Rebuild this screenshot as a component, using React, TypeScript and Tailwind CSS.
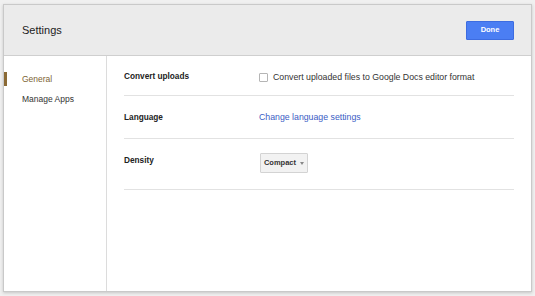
import React from "react";

export default function App() {
  const font = { fontFamily: '"Liberation Sans", Arial, Helvetica, sans-serif' };
  return (
    <div className="w-[535px] h-[296px] bg-[#f0f0f0] pt-[4px] pl-[3px]" style={font}>
      <div className="w-[529px] h-[288px] bg-white border border-[#c9c9c9] shadow-[0_1px_3px_rgba(0,0,0,0.18)] flex flex-col">
        {/* Header */}
        <div className="h-[51px] shrink-0 bg-[#ebebeb] border-b border-[#cfcfcf] flex items-center justify-between pl-[18px] pr-[17px]">
          <span className="text-[11px] text-[#222]">Settings</span>
          <button className="w-[48px] h-[19px] bg-[#4b7ef3] border border-[#3d6ce0] rounded-[1px] text-white text-[7.5px] font-bold flex items-center justify-center">
            Done
          </button>
        </div>
        {/* Body */}
        <div className="flex flex-1 min-h-0">
          {/* Sidebar */}
          <div className="w-[103px] shrink-0 border-r border-[#dcdcdc] pt-[16px]">
            <div className="relative h-[14px] flex items-center pl-[18px]">
              <div className="absolute left-0 top-0 w-[3px] h-[14px] bg-[#8b6a35]" />
              <span className="text-[8.5px] text-[#7d6333] pt-[1px]">General</span>
            </div>
            <div className="h-[14px] mt-[6px] flex items-center pl-[18px]">
              <span className="text-[8.5px] text-[#333] pt-[1px]">Manage Apps</span>
            </div>
          </div>
          {/* Content */}
          <div className="flex-1 pl-[17px] pr-[17px]">
            <div className="h-[40px] border-b border-[#e2e2e2] flex items-center pt-[4px]">
              <div className="w-[135px] text-[8.25px] font-bold text-[#222]">Convert uploads</div>
              <div className="flex items-center">
                <div className="w-[9px] h-[9px] border border-[#b5b5b5] bg-white rounded-[1px]" />
                <span className="ml-[5px] text-[8.75px] text-[#333]">Convert uploaded files to Google Docs editor format</span>
              </div>
            </div>
            <div className="h-[43px] border-b border-[#e2e2e2] flex items-center pt-[2px]">
              <div className="w-[135px] text-[8.25px] font-bold text-[#222]">Language</div>
              <span className="text-[8.75px] text-[#3a5cc4]">Change language settings</span>
            </div>
            <div className="h-[51px] border-b border-[#e2e2e2] flex items-start pt-[14px]">
              <div className="w-[135px] text-[8.25px] font-bold text-[#222] mt-[2px]">Density</div>
              <button className="ml-[1px] w-[48px] h-[20px] bg-[#f2f2f2] border border-[#d3d3d3] rounded-[1px] flex items-center justify-center gap-[4px]">
                <span className="text-[7.5px] font-bold text-[#333]">Compact</span>
                <span className="w-0 h-0 border-l-[2.5px] border-r-[2.5px] border-t-[3px] border-l-transparent border-r-transparent border-t-[#888]" />
              </button>
            </div>
          </div>
        </div>
      </div>
    </div>
  );
}
